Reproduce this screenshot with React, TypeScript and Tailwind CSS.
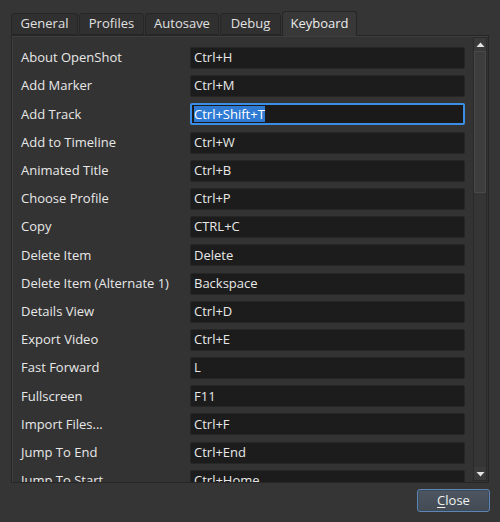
import { ChevronUp } from "lucide-react";

type Shortcut = {
  label: string;
  keys: string;
  focused?: boolean;
};

const shortcuts: Shortcut[] = [
  { label: "About OpenShot", keys: "Ctrl+H" },
  { label: "Add Marker", keys: "Ctrl+M" },
  { label: "Add Track", keys: "Ctrl+Shift+T", focused: true },
  { label: "Add to Timeline", keys: "Ctrl+W" },
  { label: "Animated Title", keys: "Ctrl+B" },
  { label: "Choose Profile", keys: "Ctrl+P" },
  { label: "Copy", keys: "CTRL+C" },
  { label: "Delete Item", keys: "Delete" },
  { label: "Delete Item (Alternate 1)", keys: "Backspace" },
  { label: "Details View", keys: "Ctrl+D" },
  { label: "Export Video", keys: "Ctrl+E" },
  { label: "Fast Forward", keys: "L" },
  { label: "Fullscreen", keys: "F11" },
  { label: "Import Files...", keys: "Ctrl+F" },
  { label: "Jump To End", keys: "Ctrl+End" },
  { label: "Jump To Start", keys: "Ctrl+Home" },
];

const tabs = [
  { name: "General", width: "w-[67px]" },
  { name: "Profiles", width: "w-[65px]" },
  { name: "Autosave", width: "w-[74px]" },
  { name: "Debug", width: "w-[61px]" },
  { name: "Keyboard", width: "w-[75px]", active: true },
];

function Arrow({ down }: { down?: boolean }) {
  return (
    <svg width="9" height="6" viewBox="0 0 9 6" className={down ? "rotate-180" : ""}>
      <path d="M4.5 0.5 L8.5 5 L0.5 5 Z" fill="#e4e4e4" />
    </svg>
  );
}

function App() {
  return (
    <main
      className="h-[522px] w-[500px] overflow-hidden bg-[#353535] px-[11px] pt-[11px] text-[13px] text-[#e8e8e8]"
      style={{ fontFamily: '"Open Sans", "DejaVu Sans", sans-serif' }}
    >
      <div className="flex h-[24px] items-end gap-[1px]">
        {tabs.map((tab) =>
          tab.active ? (
            <div
              key={tab.name}
              className={`${tab.width} relative z-10 -mb-px flex h-[25px] items-center justify-center rounded-t-[3px] border border-b-0 border-[#262626] bg-[#383838] text-[#ececec]`}
            >
              {tab.name}
            </div>
          ) : (
            <div
              key={tab.name}
              className={`${tab.width} flex h-[22px] items-center justify-center rounded-t-[3px] border border-[#262626] bg-[#303030] text-[#e0e0e0]`}
            >
              {tab.name}
            </div>
          )
        )}
      </div>

      <section className="flex h-[448px] w-[478px] border border-[#262626] bg-[#333333] shadow-[inset_1px_1px_0_#3e3e3e]">
        <div className="flex-1 overflow-hidden pl-[9px] pr-[8px] pt-[11px]">
          <div className="flex flex-col gap-[6.2px]">
            {shortcuts.map((row) => (
              <div key={row.label} className="flex h-[22px] shrink-0 items-center">
                <span className="w-[169px] shrink-0 whitespace-nowrap">{row.label}</span>
                {row.focused ? (
                  <div className="flex h-[22px] flex-1 items-center rounded-[2px] border-2 border-[#3a8ee6] bg-[#1a1a1a] pl-[2px]">
                    <span className="bg-[#2f7bd4] leading-[16px] text-white">{row.keys}</span>
                  </div>
                ) : (
                  <div className="flex h-[22px] flex-1 items-center rounded-[2px] border border-[#262626] bg-[#1c1c1c] pl-[3px]">
                    {row.keys}
                  </div>
                )}
              </div>
            ))}
          </div>
        </div>

        <div className="my-px mr-px flex w-[14px] flex-col border border-[#2a2a2a] bg-[#353535]">
          <div className="flex h-[13px] items-center justify-center bg-[#3a3a3a]">
            <Arrow />
          </div>
          <div className="h-[142px] border border-[#4a4a4a] bg-[#3d3d3d]" />
          <div className="flex-1" />
          <div className="flex h-[13px] items-center justify-center bg-[#3a3a3a]">
            <Arrow down />
          </div>
        </div>
      </section>

      <div className="mt-[6px] flex w-[479px] justify-end">
        <button
          type="button"
          className="h-[23px] w-[73px] rounded-[3px] border border-[#5d86b4] bg-gradient-to-b from-[#4d5661] to-[#434b55] text-[13px] text-[#f0f0f0] shadow-[inset_0_0_0_1px_#3c4a5a]"
        >
          <span className="underline decoration-1 underline-offset-2">C</span>lose
        </button>
      </div>
    </main>
  );
}

export default App;
